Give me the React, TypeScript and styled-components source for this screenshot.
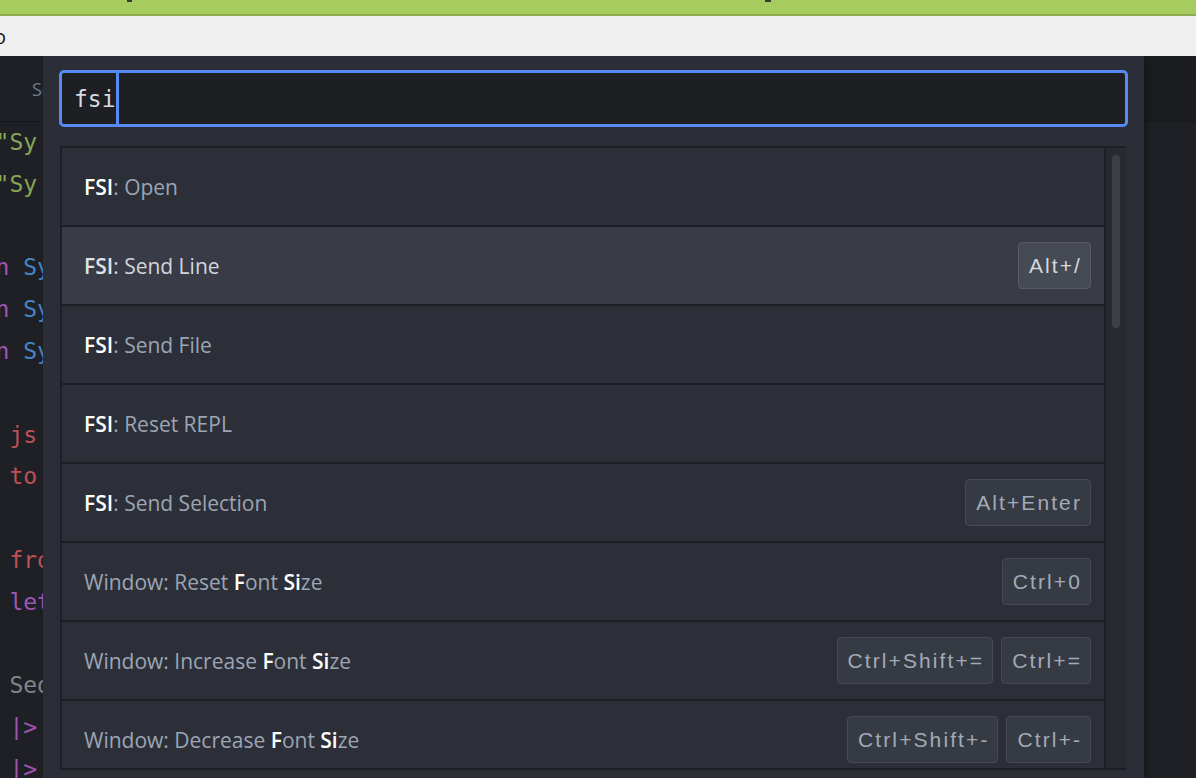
import React from "react";
import styled, { createGlobalStyle } from "styled-components";

const GlobalStyle = createGlobalStyle`
  html, body {
    margin: 0;
    padding: 0;
    background: #1e2025;
    overflow: hidden;
  }
  #root {
    width: 1196px;
    height: 778px;
  }
`;

const Page = styled.div`
  width: 1196px;
  height: 778px;
  display: flex;
  flex-direction: column;
  overflow: hidden;
  font-family: "Open Sans", "Noto Sans", sans-serif;
`;

const TitleBar = styled.div`
  height: 14px;
  flex-shrink: 0;
  background: #a6cc5f;
  border-bottom: 2px solid #8ea94f;
  display: flex;
  align-items: flex-start;
`;

const Descender = styled.span<{ $gap: number; $w: number }>`
  margin-left: ${(p) => p.$gap}px;
  width: ${(p) => p.$w}px;
  height: 2px;
  background: #3a3a2a;
`;

const MenuStrip = styled.div`
  height: 40px;
  flex-shrink: 0;
  background: #efefef;
  display: flex;
  align-items: center;
`;

const MenuLabel = styled.span`
  margin-left: -6px;
  font-size: 20px;
  color: #151515;
`;

const Workspace = styled.div`
  flex: 1;
  position: relative;
  display: flex;
  flex-direction: column;
  overflow: hidden;
`;

const TabBar = styled.div`
  height: 65px;
  flex-shrink: 0;
  display: flex;
  background: #1b1d21;
  border-bottom: 1px solid #15171a;
`;

const ActiveTab = styled.div`
  width: 420px;
  background: #1e2025;
  display: flex;
  align-items: center;
  padding-left: 32px;
  font-size: 18px;
  color: #6f7d8c;
`;

const CodeArea = styled.div`
  flex: 1;
  background: #1e2025;
  overflow: hidden;
`;

const CodeLines = styled.div`
  margin-left: -46px;
  font-family: "DejaVu Sans Mono", "Liberation Mono", monospace;
  font-size: 23px;
  line-height: 41.8px;
  white-space: pre;
  color: #7f848c;
`;

const CodeLine = styled.div`
  height: 41.8px;
`;

const Tok = styled.span<{ $c: string }>`
  color: ${(p) => p.$c};
`;

const Palette = styled.div`
  position: absolute;
  top: 0;
  bottom: 0;
  left: 43px;
  width: 1101px;
  box-sizing: border-box;
  padding: 14px 16px 0;
  background: #2b2e36;
  box-shadow: 3px 0 6px rgba(0, 0, 0, 0.25);
  display: flex;
  flex-direction: column;
`;

const QueryField = styled.div`
  height: 57px;
  flex-shrink: 0;
  box-sizing: border-box;
  border: 3px solid #568af2;
  border-radius: 5px;
  background: #1d1f23;
  display: flex;
  align-items: center;
  padding-left: 12px;
  font-family: "DejaVu Sans Mono", "Liberation Mono", monospace;
  font-size: 23px;
  color: #d7dae0;
`;

const Caret = styled.span`
  align-self: stretch;
  width: 3px;
  background: #568af2;
`;

const List = styled.div`
  margin: 19px 2px 0 1px;
  height: 624px;
  flex-shrink: 0;
  box-sizing: border-box;
  border: 2px solid #1d1f25;
  border-right: 0;
  display: flex;
  overflow: hidden;
`;

const Rows = styled.div`
  flex: 1;
  display: flex;
  flex-direction: column;
  overflow: hidden;
`;

const Row = styled.div<{ $active?: boolean }>`
  flex-shrink: 0;
  height: 79px;
  box-sizing: border-box;
  border-bottom: 2px solid #1d1f25;
  background: ${(p) => (p.$active ? "#393c47" : "#2c2f38")};
  display: flex;
  align-items: center;
  justify-content: space-between;
  padding: 0 13px 0 22px;
  font-size: 21px;
  color: ${(p) => (p.$active ? "#d2d5dc" : "#9da5b4")};
  white-space: pre;
`;

const Match = styled.span<{ $active?: boolean }>`
  font-weight: 600;
  color: ${(p) => (p.$active ? "#dfe2e7" : "#ffffff")};
`;

const Keys = styled.div`
  display: flex;
  gap: 8px;
`;

const Kbd = styled.span<{ $active?: boolean }>`
  height: 47px;
  box-sizing: border-box;
  display: inline-flex;
  align-items: center;
  padding: 0 8px 0 10px;
  border-radius: 4px;
  border: 1px solid ${(p) => (p.$active ? "#585c67" : "#464a54")};
  background: ${(p) => (p.$active ? "#464a54" : "#363a43")};
  color: ${(p) => (p.$active ? "#d4d7de" : "#a2aab8")};
  font-family: "Liberation Sans", Arial, sans-serif;
  font-size: 21px;
  letter-spacing: 2.1px;
`;

const Track = styled.div`
  width: 22px;
  flex-shrink: 0;
  box-sizing: border-box;
  border-left: 2px solid #1d1f25;
  background: #272a31;
  padding: 7px 6px 0;
`;

const Thumb = styled.div`
  width: 8px;
  height: 173px;
  border-radius: 4px;
  background: #3b3f48;
`;

type Seg = [string, boolean];

interface Item {
  label: Seg[];
  keys: string[];
  active?: boolean;
}

const fsi = (rest: string): Seg[] => [
  ["FSI", true],
  [": " + rest, false],
];

const win = (verb: string): Seg[] => [
  ["Window: " + verb + " ", false],
  ["F", true],
  ["ont ", false],
  ["Si", true],
  ["ze", false],
];

const items: Item[] = [
  { label: fsi("Open"), keys: [] },
  { label: fsi("Send Line"), keys: ["Alt+/"], active: true },
  { label: fsi("Send File"), keys: [] },
  { label: fsi("Reset REPL"), keys: [] },
  { label: fsi("Send Selection"), keys: ["Alt+Enter"] },
  { label: win("Reset"), keys: ["Ctrl+0"] },
  { label: win("Increase"), keys: ["Ctrl+Shift+=", "Ctrl+="] },
  { label: win("Decrease"), keys: ["Ctrl+Shift+-", "Ctrl+-"] },
];

const C = {
  green: "#86a656",
  purple: "#a054b4",
  blue: "#4585c6",
  red: "#bd5058",
  plain: "#7f848c",
};

type CodeTok = [string, string];
const code: CodeTok[][] = [
  [["#r ", C.purple], ['"Sy', C.green], [' stem.Net.Http"', C.green]],
  [["#r ", C.purple], ['"Sy', C.green], [' stem.Xml.Linq"', C.green]],
  [],
  [["ope", C.purple], ["n ", C.purple], ["Sy", C.blue], [" stem", C.blue]],
  [["ope", C.purple], ["n ", C.purple], ["Sy", C.blue], [" stem.IO", C.blue]],
  [["ope", C.purple], ["n ", C.purple], ["Sy", C.blue], [" stem.Text", C.blue]],
  [],
  [["    ", C.plain], ["js", C.red], [" = ", C.plain]],
  [["    ", C.plain], ["to", C.red], [" ", C.plain]],
  [],
  [["    ", C.plain], ["fr", C.red], ["om", C.red]],
  [["    ", C.plain], ["le", C.purple], ["t data =", C.purple]],
  [],
  [["    ", C.plain], ["Se", C.plain], ["q.ofList", C.plain]],
  [["    ", C.plain], ["|>", C.purple], [" Seq.map", C.plain]],
  [["    ", C.plain], ["|>", C.purple], [" Seq.iter", C.plain]],
];

export default function App() {
  return (
    <>
      <GlobalStyle />
      <Page>
        <TitleBar>
          <Descender $gap={127} $w={5} />
          <Descender $gap={633} $w={6} />
        </TitleBar>
        <MenuStrip>
          <MenuLabel>o</MenuLabel>
        </MenuStrip>
        <Workspace>
          <TabBar>
            <ActiveTab>Script.fsx</ActiveTab>
          </TabBar>
          <CodeArea>
            <CodeLines>
              {code.map((line, i) => (
                <CodeLine key={i}>
                  {line.map(([t, c], j) => (
                    <Tok key={j} $c={c}>
                      {t}
                    </Tok>
                  ))}
                </CodeLine>
              ))}
            </CodeLines>
          </CodeArea>
          <Palette>
            <QueryField>
              <span>fsi</span>
              <Caret />
            </QueryField>
            <List>
              <Rows>
                {items.map((it, i) => (
                  <Row key={i} $active={it.active}>
                    <span>
                      {it.label.map(([t, b], j) =>
                        b ? (
                          <Match key={j} $active={it.active}>
                            {t}
                          </Match>
                        ) : (
                          <span key={j}>{t}</span>
                        )
                      )}
                    </span>
                    {it.keys.length > 0 && (
                      <Keys>
                        {it.keys.map((k) => (
                          <Kbd key={k} $active={it.active}>
                            {k}
                          </Kbd>
                        ))}
                      </Keys>
                    )}
                  </Row>
                ))}
              </Rows>
              <Track>
                <Thumb />
              </Track>
            </List>
          </Palette>
        </Workspace>
      </Page>
    </>
  );
}
